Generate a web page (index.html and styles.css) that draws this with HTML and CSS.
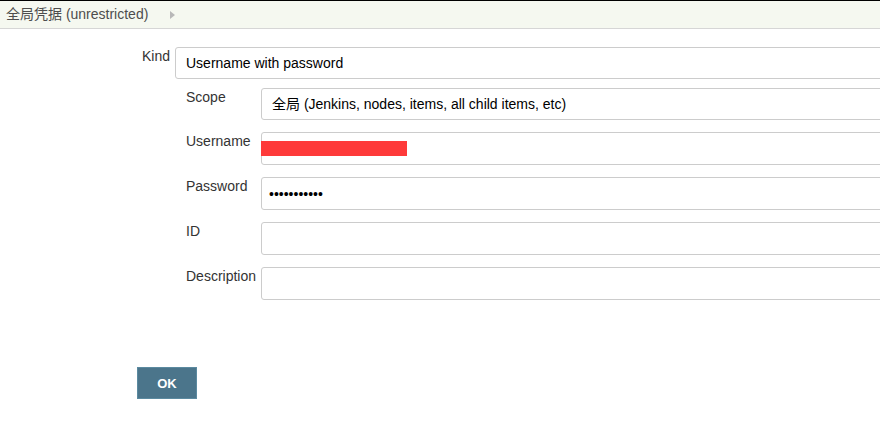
FILE: index.html
```html
<!DOCTYPE html>
<html lang="zh">
<head>
<meta charset="utf-8">
<title>Credentials</title>
<link rel="stylesheet" href="styles.css">
</head>
<body>
<div class="breadcrumb">
  <span class="crumb">全局凭据 (unrestricted)</span>
  <svg class="crumb-arrow" width="5" height="8" viewBox="0 0 5 8"><path d="M0 0 L5 4 L0 8 Z" fill="#b8b8b8"/></svg>
</div>
<form class="form">
  <div class="row kind-row">
    <label class="label kind-label">Kind</label>
    <select class="field short"><option>Username with password</option></select>
  </div>
  <div class="nested">
    <div class="row">
      <label class="label sub-label">Scope</label>
      <select class="field short"><option>全局 (Jenkins, nodes, items, all child items, etc)</option></select>
    </div>
    <div class="row">
      <label class="label sub-label">Username</label>
      <div class="field redacted-field"><span class="redact"></span></div>
    </div>
    <div class="row">
      <label class="label sub-label">Password</label>
      <input class="field password" type="password" value="abcdefghijk">
    </div>
    <div class="row">
      <label class="label sub-label">ID</label>
      <input class="field" type="text">
    </div>
    <div class="row">
      <label class="label sub-label">Description</label>
      <input class="field" type="text">
    </div>
  </div>
  <div class="actions">
    <button type="button" class="ok">OK</button>
  </div>
</form>
</body>
</html>
```

FILE: styles.css
```css
html, body {
  margin: 0;
  padding: 0;
  overflow: hidden;
  background: #fff;
}
body {
  font-family: "Liberation Sans", Arial, sans-serif;
  font-size: 14px;
  color: #333;
  width: 880px;
  height: 430px;
}
.breadcrumb {
  border-top: 1px solid #000;
  border-bottom: 1px solid #d6d6d6;
  background: #f5f8f0;
  height: 27px;
  display: flex;
  align-items: center;
  padding-left: 6px;
}
.crumb {
  color: #4d4d4d;
  font-size: 14px;
  line-height: 27px;
  font-family: "Liberation Sans", "Noto Sans CJK SC", sans-serif;
}
.crumb-arrow {
  margin-left: 22px;
  margin-top: 1px;
}
.form {
  padding-left: 142px;
  padding-top: 18px;
  overflow: hidden;
}
.row {
  display: flex;
  align-items: flex-start;
  margin-bottom: 12px;
}
.kind-row {
  margin-bottom: 9px;
}
.label {
  line-height: 20px;
  margin-top: -1px;
  color: #333;
  flex: none;
}
.kind-label {
  width: 33px;
}
.nested {
  padding-left: 44px;
}
.sub-label {
  width: 75px;
}
.field {
  box-sizing: border-box;
  flex: none;
  height: 33px;
  width: 900px;
  border: 1px solid #ccc;
  border-radius: 3px;
  background: #fff;
  font-family: "Liberation Sans", "Noto Sans CJK SC", sans-serif;
  font-size: 14px;
  color: #000;
  padding: 0 10px;
  margin: 0;
  outline: none;
}
.field.short {
  height: 32px;
}
select.field {
  appearance: none;
  -webkit-appearance: none;
}
.redacted-field {
  position: relative;
  padding: 0;
}
.redact {
  position: absolute;
  left: -1px;
  top: 8px;
  width: 146px;
  height: 15px;
  background: #fe3a3a;
}
.password {
  padding-left: 7px;
}
.actions {
  margin-top: 67px;
  margin-left: -5px;
}
.ok {
  width: 60px;
  height: 32px;
  background: #4b758b;
  border: 1px solid #5b8aa0;
  color: #fff;
  font-family: "Liberation Sans", Arial, sans-serif;
  font-weight: bold;
  font-size: 13px;
  padding: 0;
  margin: 0;
}
```
